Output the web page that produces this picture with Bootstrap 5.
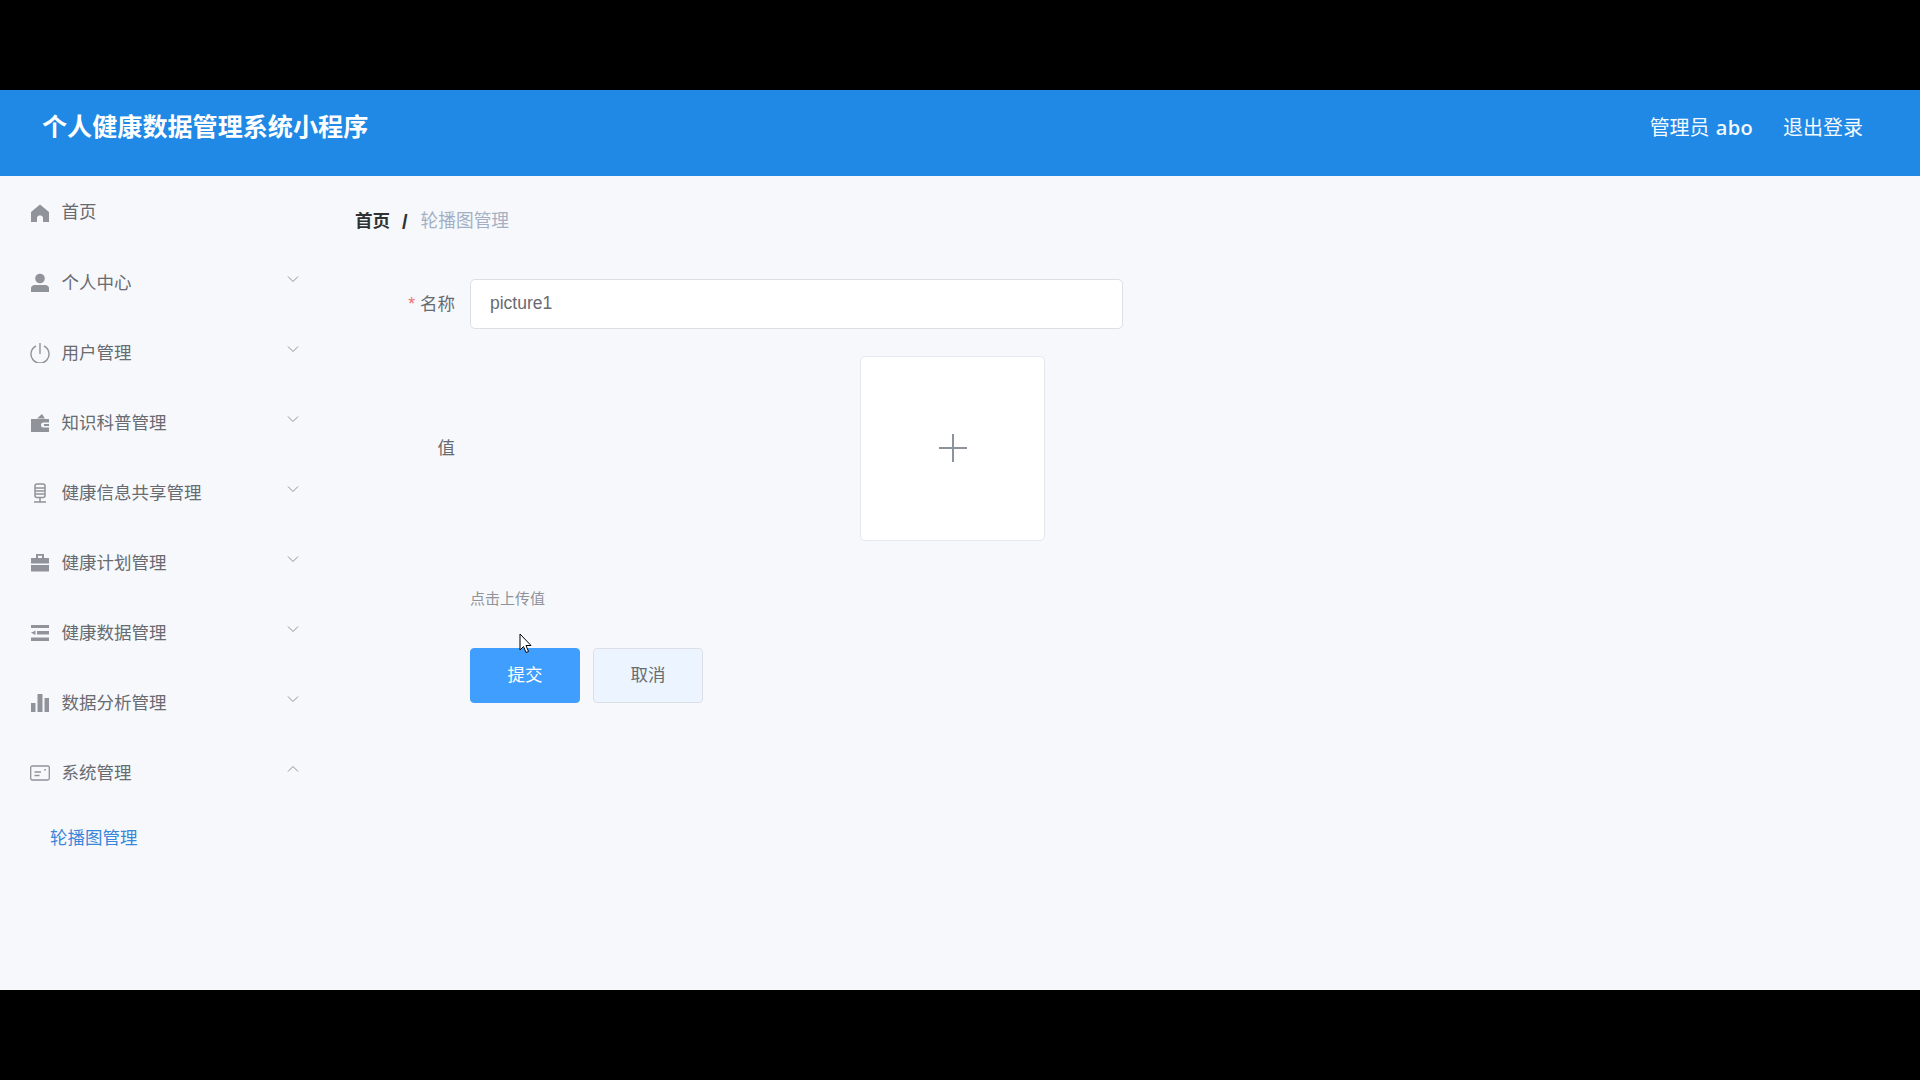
<!DOCTYPE html>
<html lang="zh">
<head>
    <meta charset="UTF-8">
    <title>个人健康数据管理系统小程序</title>
    <link href="https://cdn.jsdelivr.net/npm/bootstrap@5.3.2/dist/css/bootstrap.min.css" rel="stylesheet">
    <style>
        body { background: #000; font-family: "Liberation Sans", "Noto Sans CJK SC", sans-serif; height: 1080px; overflow: hidden; }
        .black-bar { height: 90px; }
        .app-frame { height: 900px; background: #f6f8fc; position: relative; }
        .top-bar { height: 86px; background: #2088e5; padding: 0 57px 10px 42px; }
        .app-title { font-size: 25.100px; font-weight: 700; color: #fff; }
        .top-link { font-size: 20px; color: #f2f9ff; }
        .top-user { font-family: "Open Sans", "Noto Sans CJK SC", sans-serif; word-spacing: 1px; }
        .top-name { font-weight: 600; letter-spacing: .3px; }
        .logout-link { margin-left: 6px; }
        .side-menu { width: 330px; padding-top: 1px; }
        .menu-row { height: 70px; padding-left: 30px; color: #686b70; font-size: 17.5px; position: relative; }
        .menu-row:first-child { height: 71px; }
        .menu-row svg.menu-ico { width: 20px; height: 20px; margin-right: 11.500px; flex: none; fill: #909399; }
        .menu-arrow { position: absolute; left: 287px; top: 27px; width: 12px; height: 8px; fill: none; stroke: #909399; stroke-width: 1; }
        .sub-row { height: 60px; padding-left: 50px; color: #3a87d9; font-size: 17.5px; }
        .page-main { padding: 0 25px; }
        .crumb-row { height: 103px; padding-bottom: 12px; font-size: 17.5px; }
        .crumb-home { font-weight: 700; color: #303133; }
        .crumb-sep { font-weight: 700; font-size: 20px; color: #303133; margin: 0 13px 0 12px; }
        .crumb-now { color: #a3b0c4; font-size: 17.7px; }
        .field-label { width: 115px; padding-right: 15px; text-align: right; color: #686b70; font-size: 17.5px; flex: none; }
        .req-star { color: #f56c6c; margin-right: 5px; }
        .name-row { margin-bottom: 27px; }
        .name-input.form-control { width: 653px; height: 50px; border-color: #dcdfe6; border-radius: 5px; font-size: 17.5px; color: #686b70; padding: 0 19px 2px; box-shadow: none; }
        .upload-box { width: 185px; height: 185px; margin-left: 390px; padding-bottom: 2px; background: #fff; border: 1px solid #e4e7ed; border-radius: 5px; }
        .upload-box svg { width: 30px; height: 30px; stroke: #8c939d; stroke-width: 2; }
        .upload-tip { margin-left: 115px; font-size: 15px; color: #909399; line-height: 20px; margin-top: 48px; }
        .form-btns { margin: 39px 0 0 115px; gap: 13px; }
        .form-btns .btn { width: 110px; height: 55px; font-size: 17.5px; border-radius: 4px; padding: 0; }
        .btn-save { background: #409eff; border: 1px solid #409eff; color: #fff; }
        .btn-back { background: #ecf5ff; border: 1px solid #dcdfe6; color: #686b70; }
        .mouse-ptr { position: absolute; left: 519px; top: 543px; width: 14px; height: 21px; }
    </style>
</head>
<body>
    <div class="black-bar"></div>
    <div class="app-frame d-flex flex-column">
        <header class="top-bar d-flex align-items-center justify-content-between">
            <div class="app-title">个人健康数据管理系统小程序</div>
            <div class="d-flex gap-4 top-link">
                <span class="top-user">管理员 <span class="top-name">abo</span></span>
                <span class="logout-link">退出登录</span>
            </div>
        </header>
        <div class="d-flex flex-grow-1">
            <nav class="side-menu">
                <div class="menu-row d-flex align-items-center">
                    <svg class="menu-ico" viewBox="0 0 20 20"><path d="M10 1.500 L19 9 V19 H13 V14 Q10 10.500 7 14 V19 H1 V9 Z"/></svg>首页
                </div>
                <div class="menu-row d-flex align-items-center">
                    <svg class="menu-ico" viewBox="0 0 20 20"><circle cx="10" cy="5.500" r="4.800"/><path d="M1 19 V15.500 Q1 12 5 12 H15 Q19 12 19 15.500 V19 Z"/></svg>个人中心
                    <svg class="menu-arrow" viewBox="0 0 12 8"><path d="M1 1.500 L6 6.500 L11 1.500"/></svg>
                </div>
                <div class="menu-row d-flex align-items-center">
                    <svg class="menu-ico" viewBox="0 0 20 20" style="fill:none;stroke:#909399;stroke-width:1.400"><path d="M6 3 A9 9 0 1 0 14 3 M10 0 V11"/></svg>用户管理
                    <svg class="menu-arrow" viewBox="0 0 12 8"><path d="M1 1.500 L6 6.500 L11 1.500"/></svg>
                </div>
                <div class="menu-row d-flex align-items-center">
                    <svg class="menu-ico" viewBox="0 0 20 20"><path fill-rule="evenodd" d="M1 6 H19 V9.500 H13.500 Q11 9.500 11 12 Q11 14.500 13.500 14.500 H19 V19 H1 Z M7 5.500 L12 1 L15 5.500 Z"/><path d="M14 11 H19 V13 H14 Z"/></svg>知识科普管理
                    <svg class="menu-arrow" viewBox="0 0 12 8"><path d="M1 1.500 L6 6.500 L11 1.500"/></svg>
                </div>
                <div class="menu-row d-flex align-items-center">
                    <svg class="menu-ico" viewBox="0 0 20 20" style="fill:none;stroke:#909399;stroke-width:1.500"><rect x="5" y="1" width="10" height="13.500" rx="2"/><path d="M5 5 H15 M5 8 H15 M5 11 H15 M10 14.500 V18.500 M4 19 H16"/></svg>健康信息共享管理
                    <svg class="menu-arrow" viewBox="0 0 12 8"><path d="M1 1.500 L6 6.500 L11 1.500"/></svg>
                </div>
                <div class="menu-row d-flex align-items-center">
                    <svg class="menu-ico" viewBox="0 0 20 20"><path fill-rule="evenodd" d="M6 5 V1 H14 V5 H19 V10.500 H1 V5 Z M8 2.800 V5 H12 V2.800 Z"/><path d="M1 12 H19 V18.500 H1 Z"/></svg>健康计划管理
                    <svg class="menu-arrow" viewBox="0 0 12 8"><path d="M1 1.500 L6 6.500 L11 1.500"/></svg>
                </div>
                <div class="menu-row d-flex align-items-center">
                    <svg class="menu-ico" viewBox="0 0 20 20"><path d="M1 2 H19 V5 H1 Z M7 8 H19 V11.500 H7 Z M1 14.500 H19 V18 H1 Z M1 9.800 L5.500 7.500 V12 Z"/></svg>健康数据管理
                    <svg class="menu-arrow" viewBox="0 0 12 8"><path d="M1 1.500 L6 6.500 L11 1.500"/></svg>
                </div>
                <div class="menu-row d-flex align-items-center">
                    <svg class="menu-ico" viewBox="0 0 20 20"><path d="M1 10 H5.500 V19 H1 Z M7.500 1 H12.500 V19 H7.500 Z M14.500 5 H19 V19 H14.500 Z"/></svg>数据分析管理
                    <svg class="menu-arrow" viewBox="0 0 12 8"><path d="M1 1.500 L6 6.500 L11 1.500"/></svg>
                </div>
                <div class="menu-row d-flex align-items-center">
                    <svg class="menu-ico" viewBox="0 0 20 20" style="fill:none;stroke:#909399;stroke-width:1.300"><rect x=".7" y="3" width="18.600" height="14" rx="1.500"/><path d="M4.500 9 H11 M4.500 12.500 H9.500 M14 6.800 H16"/></svg>系统管理
                    <svg class="menu-arrow" viewBox="0 0 12 8"><path d="M1 6.500 L6 1.500 L11 6.500"/></svg>
                </div>
                <div class="sub-row d-flex align-items-center">轮播图管理</div>
            </nav>
            <main class="page-main flex-grow-1">
                <div class="crumb-row d-flex align-items-center">
                    <span class="crumb-home">首页</span><span class="crumb-sep">/</span><span class="crumb-now">轮播图管理</span>
                </div>
                <form>
                    <div class="d-flex align-items-center name-row">
                        <label class="field-label"><span class="req-star">*</span>名称</label>
                        <input class="form-control name-input" type="text" value="picture1">
                    </div>
                    <div class="d-flex align-items-center">
                        <label class="field-label">值</label>
                        <div class="upload-box d-flex align-items-center justify-content-center">
                            <svg viewBox="0 0 30 30"><path d="M1 15 H29 M15 1 V29"/></svg>
                        </div>
                    </div>
                    <div class="upload-tip">点击上传值</div>
                    <div class="form-btns d-flex">
                        <button type="button" class="btn btn-save">提交</button>
                        <button type="button" class="btn btn-back">取消</button>
                    </div>
                </form>
            </main>
        </div>
        <svg class="mouse-ptr" viewBox="0 0 14 21"><path d="M1 1 V17 L4.500 13.500 L7 19.500 L9.500 18.500 L7 12.500 H12 Z" fill="#fff" stroke="#000"/></svg>
    </div>
    <div class="black-bar"></div>
    <script src="https://cdn.jsdelivr.net/npm/bootstrap@5.3.2/dist/js/bootstrap.bundle.min.js"></script>
</body>
</html>
